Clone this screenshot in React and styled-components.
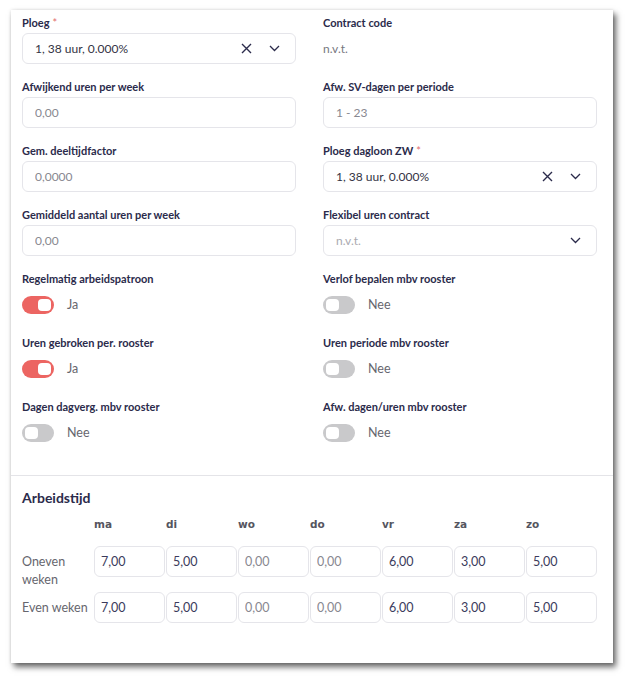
import React from "react";
import styled, { createGlobalStyle } from "styled-components";

const GlobalStyle = createGlobalStyle`
  html, body {
    margin: 0;
    padding: 0;
    background: #ffffff;
  }
  body {
    font-family: Lato, "Open Sans", sans-serif;
    color: #2b2b4b;
  }
`;

const fields = [
  { type: "select", label: "Ploeg", required: true, value: "1, 38 uur, 0.000%", clear: true },
  { type: "text", label: "Contract code", value: "n.v.t." },
  { type: "input", label: "Afwijkend uren per week", placeholder: "0,00" },
  { type: "input", label: "Afw. SV-dagen per periode", placeholder: "1 - 23" },
  { type: "input", label: "Gem. deeltijdfactor", placeholder: "0,0000" },
  { type: "select", label: "Ploeg dagloon ZW", required: true, value: "1, 38 uur, 0.000%", clear: true },
  { type: "input", label: "Gemiddeld aantal uren per week", placeholder: "0,00" },
  { type: "select", label: "Flexibel uren contract", placeholder: "n.v.t." },
  { type: "toggle", label: "Regelmatig arbeidspatroon", on: true },
  { type: "toggle", label: "Verlof bepalen mbv rooster", on: false },
  { type: "toggle", label: "Uren gebroken per. rooster", on: true },
  { type: "toggle", label: "Uren periode mbv rooster", on: false },
  { type: "toggle", label: "Dagen dagverg. mbv rooster", on: false },
  { type: "toggle", label: "Afw. dagen/uren mbv rooster", on: false },
];

const days = ["ma", "di", "wo", "do", "vr", "za", "zo"];

const weeks = [
  { label: "Oneven weken", values: ["7,00", "5,00", "", "", "6,00", "3,00", "5,00"] },
  { label: "Even weken", values: ["7,00", "5,00", "", "", "6,00", "3,00", "5,00"] },
];

function XIcon() {
  return (
    <svg width="11" height="11" viewBox="0 0 11 11">
      <path d="M1 1 L10 10 M10 1 L1 10" stroke="#2b2b4b" strokeWidth="1.4" fill="none" />
    </svg>
  );
}

function ChevronIcon() {
  return (
    <svg width="11" height="7" viewBox="0 0 11 7">
      <path d="M1 1 L5.5 5.5 L10 1" stroke="#2b2b4b" strokeWidth="1.3" fill="none" />
    </svg>
  );
}

function Field({ field }) {
  return (
    <FieldGroup>
      <Label>
        {field.label}
        {field.required && <Required>*</Required>}
      </Label>
      {field.type === "input" && <Input placeholder={field.placeholder} readOnly />}
      {field.type === "text" && <PlainValue>{field.value}</PlainValue>}
      {field.type === "select" && (
        <SelectBox>
          <SelectValue $muted={!field.value}>{field.value || field.placeholder}</SelectValue>
          {field.clear && (
            <IconSlot>
              <XIcon />
            </IconSlot>
          )}
          <IconSlot>
            <ChevronIcon />
          </IconSlot>
        </SelectBox>
      )}
      {field.type === "toggle" && (
        <ToggleRow>
          <Switch $on={field.on}>
            <Knob $on={field.on} />
          </Switch>
          <ToggleText>{field.on ? "Ja" : "Nee"}</ToggleText>
        </ToggleRow>
      )}
    </FieldGroup>
  );
}

function App() {
  return (
    <>
      <GlobalStyle />
      <Page>
        <Card>
          <FormGrid>
            {fields.map((f) => (
              <Field key={f.label} field={f} />
            ))}
          </FormGrid>
          <Section>
            <Heading>Arbeidstijd</Heading>
            <Schedule>
              <span />
              {days.map((d) => (
                <DayHead key={d}>{d}</DayHead>
              ))}
              {weeks.map((w) => (
                <React.Fragment key={w.label}>
                  <RowLabel>{w.label}</RowLabel>
                  {w.values.map((v, i) => (
                    <DayInput key={i} defaultValue={v} placeholder="0,00" />
                  ))}
                </React.Fragment>
              ))}
            </Schedule>
          </Section>
        </Card>
      </Page>
    </>
  );
}

export default App;

const Page = styled.div`
  padding: 10px 0 19px 11px;
`;

const Card = styled.div`
  width: 602px;
  height: 653px;
  box-sizing: border-box;
  background: #ffffff;
  box-shadow: 0 0 3px rgba(0, 0, 0, 0.12), 3px 4px 6px rgba(0, 0, 0, 0.6);
`;

const FormGrid = styled.div`
  display: grid;
  grid-template-columns: 274px 274px;
  column-gap: 27px;
  row-gap: 16px;
  padding: 6px 16px 27px 11px;
  border-bottom: 1px solid #e4e4e8;
`;

const FieldGroup = styled.div`
  display: flex;
  flex-direction: column;
  gap: 3px;
`;

const Label = styled.div`
  font-size: 11px;
  font-weight: 700;
  line-height: 14px;
  color: #2b2b4b;
  white-space: nowrap;
`;

const Required = styled.span`
  color: #e36d6d;
  margin-left: 3px;
  font-weight: 400;
`;

const boxBase = `
  box-sizing: border-box;
  height: 31px;
  width: 100%;
  border: 1px solid #e5e5ea;
  border-radius: 6px;
  background: #ffffff;
  font-family: Lato, "Open Sans", sans-serif;
  font-size: 12px;
`;

const Input = styled.input`
  ${boxBase}
  padding: 0 12px;
  outline: none;
  color: #333344;
  &::placeholder {
    color: #888890;
  }
`;

const PlainValue = styled.div`
  height: 31px;
  display: flex;
  align-items: center;
  font-size: 12px;
  color: #77777f;
`;

const SelectBox = styled.div`
  ${boxBase}
  display: flex;
  align-items: center;
  padding: 0 10px 0 12px;
  gap: 7px;
`;

const SelectValue = styled.span`
  flex: 1;
  color: ${(p) => (p.$muted ? "#aaaab0" : "#333344")};
`;

const IconSlot = styled.span`
  width: 21px;
  display: flex;
  justify-content: center;
  align-items: center;
`;

const ToggleRow = styled.div`
  height: 31px;
  display: flex;
  align-items: center;
  gap: 13px;
`;

const Switch = styled.span`
  position: relative;
  width: 32px;
  height: 18px;
  border-radius: 9px;
  background: ${(p) => (p.$on ? "#ec6562" : "#c9c9cb")};
`;

const Knob = styled.span`
  position: absolute;
  top: 3px;
  left: ${(p) => (p.$on ? "16px" : "3px")};
  width: 13px;
  height: 12px;
  border-radius: 4px;
  background: #ffffff;
`;

const ToggleText = styled.span`
  font-size: 12.5px;
  color: #66666e;
`;

const Section = styled.div`
  padding: 13px 16px 0 11px;
`;

const Heading = styled.div`
  font-size: 14px;
  font-weight: 700;
  line-height: 18px;
  color: #2b2b4b;
`;

const Schedule = styled.div`
  display: grid;
  grid-template-columns: repeat(8, 72px);
  row-gap: 3px;
  margin-top: 9px;
  align-items: start;
`;

const DayHead = styled.div`
  font-family: "DejaVu Sans", Verdana, sans-serif;
  font-size: 10.5px;
  font-weight: 700;
  line-height: 16px;
  color: #555560;
  margin-bottom: 11px;
`;

const RowLabel = styled.div`
  padding-top: 7px;
  font-size: 12.5px;
  line-height: 18px;
  color: #66666e;
`;

const DayInput = styled.input`
  box-sizing: border-box;
  width: 71px;
  height: 31px;
  padding: 0 6px;
  border: 1px solid #e5e5ea;
  border-radius: 6px;
  outline: none;
  font-family: Lato, "Open Sans", sans-serif;
  font-size: 12.5px;
  color: #3b3b5c;
  &::placeholder {
    color: #888890;
  }
`;
